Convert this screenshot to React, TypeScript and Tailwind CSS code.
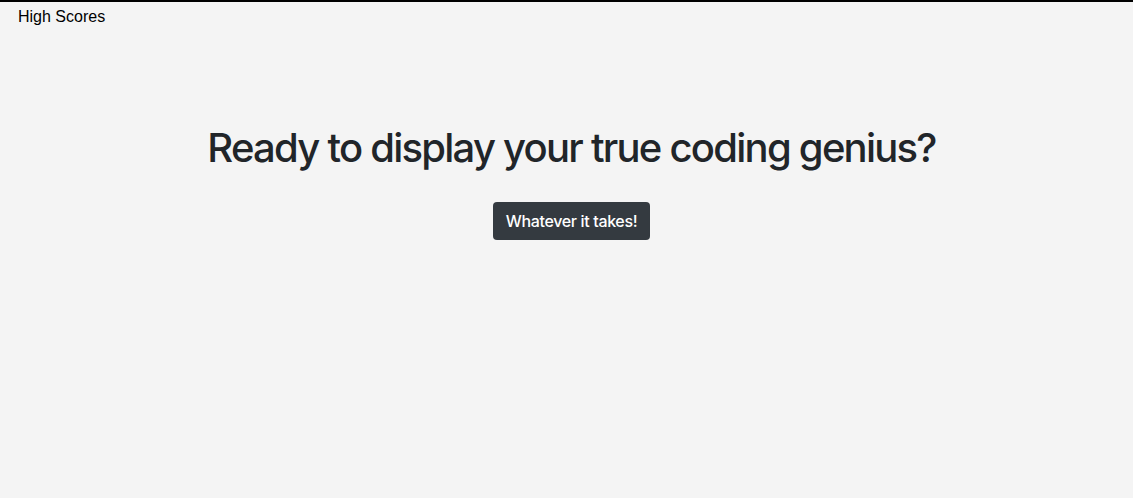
export default function App() {
  return (
    <div className="min-h-screen w-full bg-[#f4f4f4] border-t-2 border-black">
      <nav className="pl-[18px] pt-[4px] h-[26px] flex items-center">
        <a className="text-[16px] leading-[20px] text-black font-['Liberation_Sans',Arial,sans-serif] cursor-pointer">
          High Scores
        </a>
      </nav>
      <main className="flex flex-col items-center pt-[96px] pl-[10px] font-['Inter',system-ui,sans-serif]">
        <h1 className="text-[40px] leading-[48px] font-medium text-[#212529] tracking-[-1.75px]">
          Ready to display your true coding genius?
        </h1>
        <button className="mt-[30px] h-[38px] px-[13px] rounded-[4px] bg-[#343a40] text-white text-[16px] font-medium tracking-[-0.35px]">
          Whatever it takes!
        </button>
      </main>
    </div>
  );
}
